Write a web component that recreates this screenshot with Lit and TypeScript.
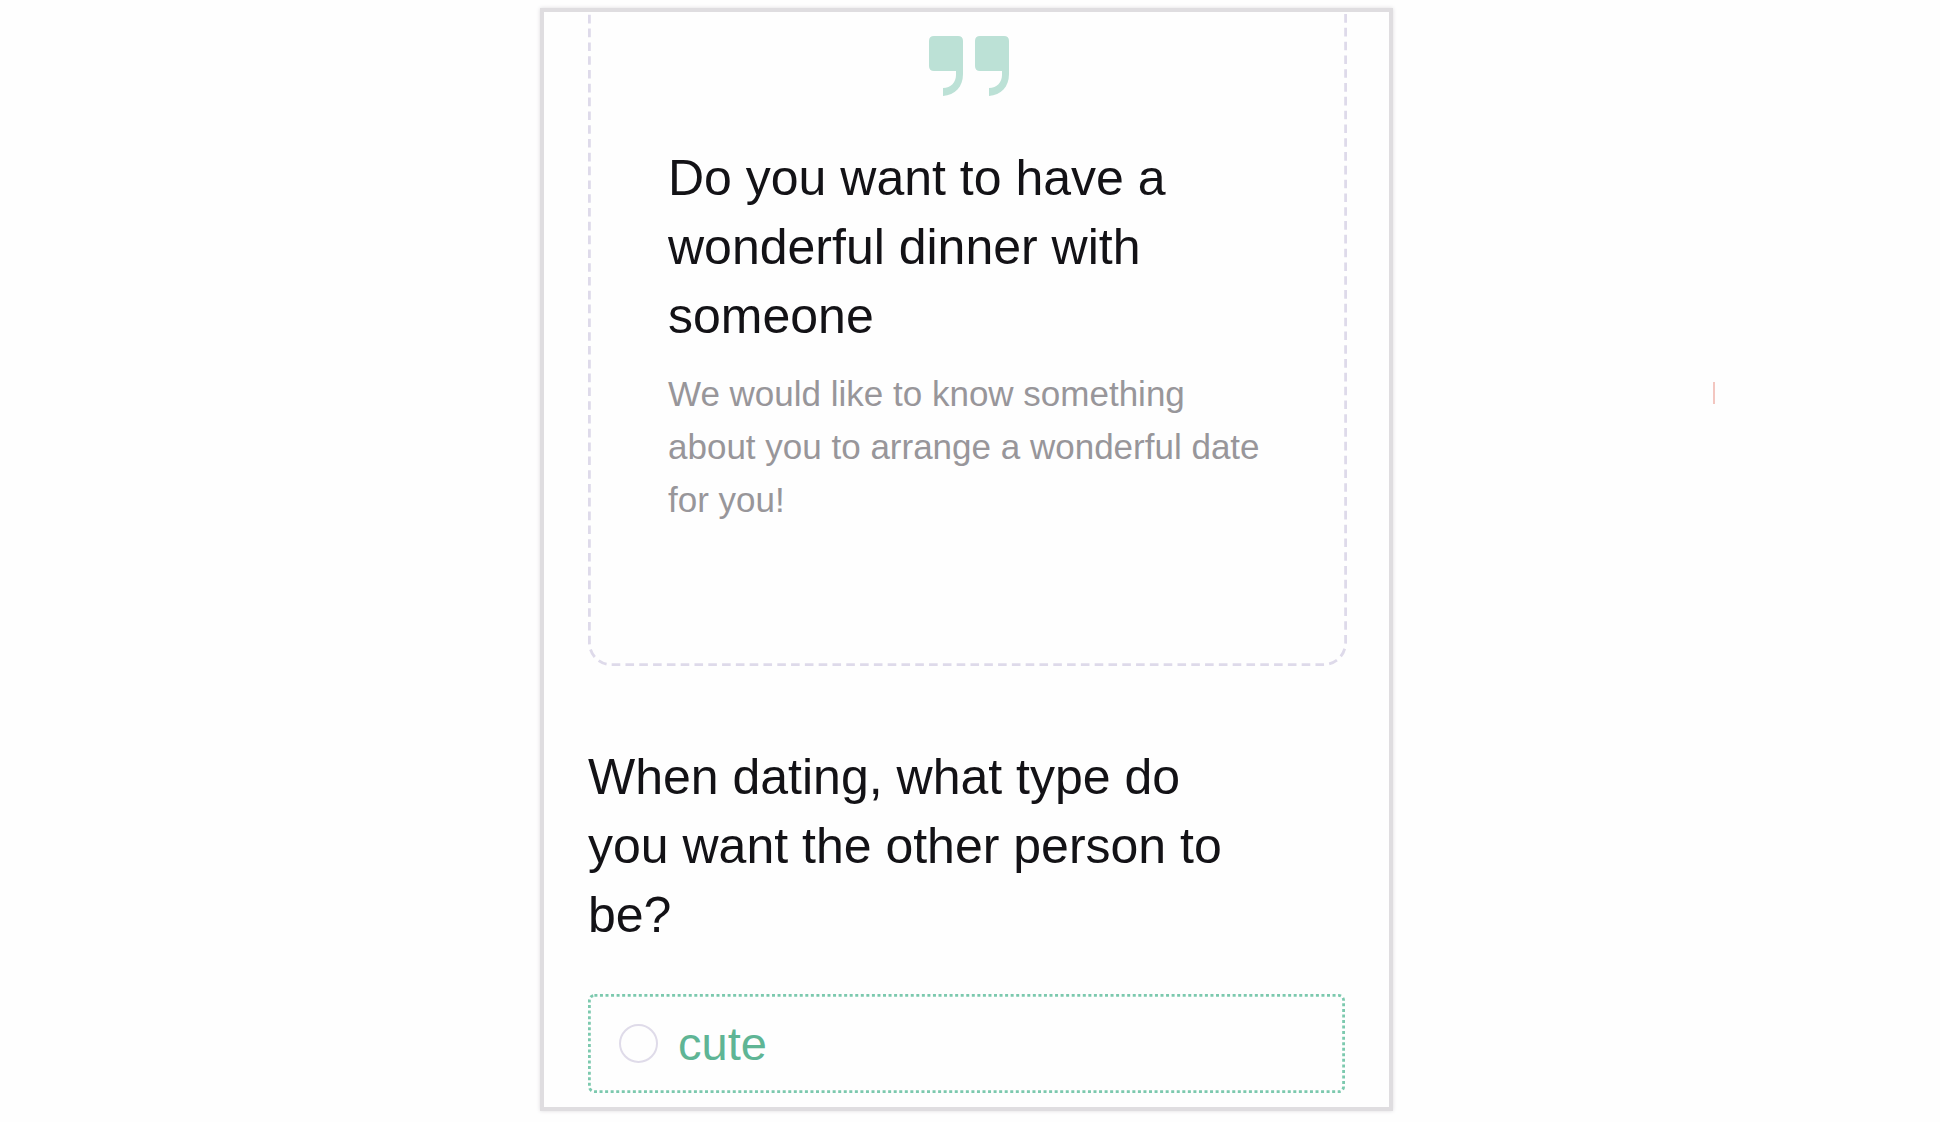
import { LitElement, html, css, svg } from "lit";
import { customElement } from "lit/decorators.js";

const quoteMark = svg`<path d="M5 0H29Q34 0 34 5V38C34 51 26 59 14 60V52C22 52 27 46 27 39V35H5Q0 35 0 30V5Q0 0 5 0Z" />`;

@customElement("app-root")
export class AppRoot extends LitElement {
  static styles = css`
    :host {
      display: block;
      min-height: 100vh;
      background: #fefefe;
      color: #131216;
      font-family: "Liberation Sans", Arial, sans-serif;
    }
    .page {
      display: grid;
      grid-template-columns: 540fr 853fr 547fr;
      align-items: start;
      padding: 8px 0 11px;
    }
    .frame {
      grid-column: 2;
      box-sizing: border-box;
      border: 4px solid #dfdde0;
      box-shadow: 0 0 4px #dfdde0;
      padding: 0 42px 14px 44px;
      background: #fefefe;
    }
    .intro {
      position: relative;
      padding: 24px 70px 140px 80px;
    }
    .outline {
      position: absolute;
      inset: 0;
      width: 100%;
      height: 100%;
      overflow: hidden;
      pointer-events: none;
    }
    .dashed {
      fill: none;
      stroke: #dedaea;
      stroke-width: 2.8;
      stroke-dasharray: 8.6 5.2;
    }
    .dotted {
      fill: none;
      stroke: #7cc9ae;
      stroke-width: 2.8;
      stroke-dasharray: 3 2.55;
    }
    .quote {
      display: block;
      width: 80px;
      height: 60px;
      margin: 0 auto 48px;
      fill: #bce1d6;
    }
    .quote-row {
      padding-right: 8px;
    }
    h1,
    h2 {
      margin: 0;
      font-size: 50px;
      line-height: 69px;
      font-weight: 400;
    }
    .note {
      margin: 16px 0 0;
      font-size: 35px;
      line-height: 53px;
      color: #98969a;
    }
    h2 {
      margin: 77px 98px 44px 0;
    }
    .option {
      position: relative;
      display: flex;
      align-items: center;
      gap: 20px;
      box-sizing: border-box;
      min-height: 99px;
      margin-right: 2px;
      padding: 0 31px;
      font-size: 47px;
      line-height: 60px;
      color: #5fb595;
    }
    .radio {
      appearance: none;
      box-sizing: border-box;
      width: 39px;
      height: 39px;
      margin: 0;
      border: 2px solid #dfdbe9;
      border-radius: 50%;
      background: #fefefe;
    }
    .radio:checked {
      border: 12px solid #5fb595;
    }
    .side {
      display: flex;
      justify-content: center;
      padding: 374px 0 0 94px;
    }
    .caret {
      width: 2px;
      height: 22px;
      background: #f3c6c0;
    }
  `;

  render() {
    return html`
      <div class="page">
        <main class="frame">
          <section class="intro">
            <svg class="outline" aria-hidden="true">
              <rect class="dashed" x="1.4" y="-60" width="calc(100% - 2.8px)" height="calc(100% + 58.6px)" rx="22" />
            </svg>
            <div class="quote-row">
              <svg class="quote" viewBox="0 0 80 60" aria-hidden="true">
                ${quoteMark}
                <g transform="translate(46 0)">${quoteMark}</g>
              </svg>
            </div>
            <h1>Do you want to have a wonderful dinner with someone</h1>
            <p class="note">
              We would like to know something about you to arrange a wonderful date for you!
            </p>
          </section>
          <section role="radiogroup" aria-labelledby="type-question">
            <h2 id="type-question">When dating, what type do you want the other person to be?</h2>
            <label class="option" for="type-cute">
              <svg class="outline" aria-hidden="true">
                <rect class="dotted" x="1.4" y="1.4" width="calc(100% - 2.8px)" height="calc(100% - 2.8px)" rx="5" />
              </svg>
              <input class="radio" type="radio" id="type-cute" name="type" value="cute" />
              <span>cute</span>
            </label>
          </section>
        </main>
        <div class="side"><span class="caret"></span></div>
      </div>
    `;
  }
}
